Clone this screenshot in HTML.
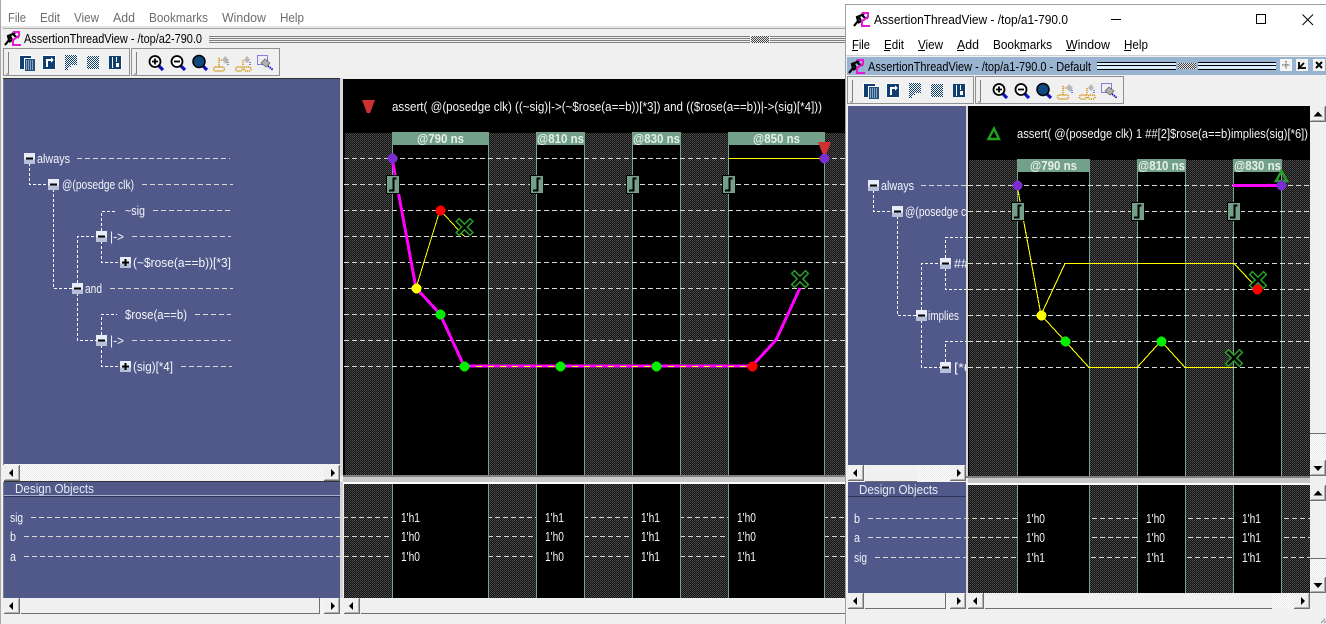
<!DOCTYPE html>
<html><head><meta charset="utf-8"><style>
html,body{margin:0;padding:0;background:#f0f0f0;overflow:hidden}
svg{display:block;font-family:"Liberation Sans",sans-serif}
text{font-size:12.5px;white-space:pre}
.w{fill:#f4f6fa}.k{fill:#000}.g{fill:#6d6d6d}.h{fill:#e6f0ea;font-weight:bold}
.d{fill:none;stroke:#d8d8d0;stroke-width:1;stroke-dasharray:5 3}
.c{fill:none;stroke:#fff;stroke-width:1;stroke-dasharray:3 2;shape-rendering:crispEdges}
.l{stroke:#78a48c;stroke-width:1}
.r{shape-rendering:crispEdges}
</style></head><body>
<svg width="1326" height="624" viewBox="0 0 1326 624" xmlns="http://www.w3.org/2000/svg">
<defs>
<pattern id="dot" width="2" height="2" patternUnits="userSpaceOnUse"><rect width="2" height="2" fill="#141414"/><rect width="1" height="1" fill="#4e4e4e"/><rect x="1" y="1" width="1" height="1" fill="#3e3e3e"/></pattern>
<pattern id="dit" width="2" height="2" patternUnits="userSpaceOnUse"><rect width="2" height="2" fill="#fff"/><rect width="1" height="1" fill="#e8e8e8"/><rect x="1" y="1" width="1" height="1" fill="#e8e8e8"/></pattern>
<pattern id="chk" width="2" height="2" patternUnits="userSpaceOnUse"><rect width="2" height="2" fill="#fff"/><rect width="1" height="1" fill="#0f3f70"/><rect x="1" y="1" width="1" height="1" fill="#0f3f70"/></pattern>
<pattern id="gry" width="2" height="2" patternUnits="userSpaceOnUse"><rect width="2" height="2" fill="#e8e8e8"/><rect width="1" height="1" fill="#404040"/><rect x="1" y="1" width="1" height="1" fill="#404040"/></pattern>

<g id="btnbase" class="r"><rect width="16" height="16" fill="#f0f0f0"/><rect x="0" y="15" width="16" height="1" fill="#707070"/><rect x="15" y="0" width="1" height="16" fill="#707070"/><rect x="1" y="14" width="14" height="1" fill="#b0b0b0"/><rect x="14" y="1" width="1" height="14" fill="#b0b0b0"/></g>
<g id="bl"><use href="#btnbase"/><path d="M5 8L9 4V12Z" fill="#000"/></g>
<g id="br"><use href="#btnbase"/><path d="M11 8L7 4V12Z" fill="#000"/></g>
<g id="bu"><use href="#btnbase"/><path d="M8 5.500L3.500 10.500H12.500Z" fill="#000"/></g>
<g id="bd"><use href="#btnbase"/><path d="M8 11L3.500 6H12.500Z" fill="#000"/></g>

<g id="gate" class="r"><rect x="-6" y="-9" width="13" height="18" fill="#73a088" stroke="#000" stroke-width="1"/><path d="M-3.500 6H1V-6H4" fill="none" stroke="#000" stroke-width="2"/></g>
<g id="xm"><path d="M-5.500 -5.500L5.500 5.500M5.500 -5.500L-5.500 5.500" stroke="#2aa02a" stroke-width="5.500" stroke-linecap="square"/><path d="M-5.500 -5.500L5.500 5.500M5.500 -5.500L-5.500 5.500" stroke="#000" stroke-width="2.600" stroke-linecap="square"/></g>
<g id="minus"><rect x="-5.500" y="-5.500" width="11" height="11" fill="#e8ecf6" class="r"/><rect x="-5.500" y="1" width="11" height="4.500" fill="#b8c0d8" class="r"/><rect x="-3.500" y="-1" width="7" height="2" fill="#000" class="r"/></g>
<g id="plus"><use href="#minus"/><rect x="-1" y="-3.500" width="2" height="7" fill="#000" class="r"/></g>

<g id="logo">
<path d="M1 14L5 9L4 5L9 3L12 6L15 6M6 5L8 9L5 11M7 9L10 10" fill="none" stroke="#000" stroke-width="2.200"/>
<circle cx="10" cy="1.800" r="1.600" fill="#000"/>
<path d="M9 1H15V5L9 9V14H17" fill="none" stroke="#e818d8" stroke-width="2"/>
</g>

<g id="tb">
<g class="r">
<rect x="3.500" y="48.500" width="126" height="27" fill="#f0f0f0" stroke="#909090"/>
<rect x="131.500" y="48.500" width="148" height="27" fill="#f0f0f0" stroke="#909090"/>
<path d="M8.500 52V74H6M136.500 52V74H134" fill="none" stroke="#808080"/>
<rect x="19" y="55" width="12" height="14" fill="#fff"/>
<rect x="20" y="56" width="11" height="13" fill="#0f3f70"/>
<rect x="24" y="58" width="11" height="13" fill="#fff"/>
<rect x="25" y="59" width="10" height="12" fill="#24507e"/>
<g fill="#8aa4c0"><rect x="26" y="60" width="1" height="10"/><rect x="28" y="60" width="1" height="10"/><rect x="30" y="60" width="1" height="10"/><rect x="32" y="60" width="1" height="10"/></g>
<rect x="42" y="55" width="14" height="15" fill="#fff"/>
<rect x="43" y="56" width="12" height="13" fill="#0f3f70"/>
<path d="M47 67V60H53" fill="none" stroke="#fff" stroke-width="2"/>
<path d="M51 57.500L54 60L51 62.500Z" fill="#fff"/>
<rect x="65" y="55" width="12" height="10" fill="url(#chk)"/>
<rect x="65" y="65" width="6" height="2" fill="url(#chk)"/>
<rect x="65" y="67" width="3" height="3" fill="url(#chk)"/>
<rect x="87" y="56" width="12" height="13" fill="url(#chk)"/>
<rect x="109" y="56" width="13" height="13" fill="#fff"/>
<rect x="109" y="56" width="12" height="13" fill="#0f3f70"/>
<rect x="112" y="57" width="1" height="11" fill="#fff"/>
<rect x="116" y="57" width="1" height="5" fill="#fff"/>
<rect x="116" y="63" width="3" height="4" fill="#fff"/>
</g>
<g>
<path d="M159 66L163 70" stroke="#1010c0" stroke-width="3.200"/>
<circle cx="155" cy="61.500" r="5.500" fill="#fff" stroke="#000" stroke-width="1.800"/>
<path d="M152 61.500H158M155 58.500V64.500" stroke="#000" stroke-width="1.800"/>
<path d="M181 66L185 70" stroke="#1010c0" stroke-width="3.200"/>
<circle cx="177" cy="61.500" r="5.500" fill="#fff" stroke="#000" stroke-width="1.800"/>
<path d="M174 61.500H180" stroke="#000" stroke-width="1.800"/>
<path d="M203 66L207 70" stroke="#1010c0" stroke-width="3.200"/>
<circle cx="199" cy="61.500" r="6" fill="#0e4a80" stroke="#000" stroke-width="1.500"/>
<rect x="213.500" y="67" width="11" height="4" rx="2" fill="none" stroke="#d09000" stroke-width="1.400" stroke-dasharray="1.200 .8"/>
<path d="M219 67V57M219 60H222" stroke="#d09000" stroke-width="1.300" stroke-dasharray="1.200 .8" fill="none"/>
<path d="M225 56L229 60L226 64L222 60Z" fill="#b8b8b8"/>
<path d="M228 62V66" stroke="#1010c0" stroke-dasharray="1 1"/>
<rect x="235.500" y="67" width="7" height="4" rx="2" fill="none" stroke="#d09000" stroke-width="1.400" stroke-dasharray="1.200 .8"/>
<rect x="244" y="67" width="7" height="4" rx="2" fill="none" stroke="#d09000" stroke-width="1.400" stroke-dasharray="1.200 .8"/>
<path d="M243 67V60" stroke="#d09000" stroke-width="1.300" stroke-dasharray="1.200 .8"/>
<path d="M247 56L250 60L247 63L244 60Z" fill="#b8b8b8"/>
<path d="M250 62V66" stroke="#1010c0" stroke-dasharray="1 1"/>
<rect x="257.500" y="55.500" width="10" height="9" fill="none" stroke="#1010c0" stroke-dasharray="1 1"/>
<path d="M265 59L270 63L266 67L261 63Z" fill="#b0b0b0" stroke="#666" stroke-width=".7"/>
<path d="M268 66L273 70" stroke="#1010c0" stroke-width="1.800" stroke-dasharray="1.500 .7"/>
</g>
</g>
</defs>

<!-- LEFT WINDOW -->
<rect width="1326" height="624" fill="#f0f0f0" class="r"/>
<rect width="846" height="26" fill="#fff" class="r"/>
<rect x="846" width="480" height="4" fill="#fff" class="r"/>
<rect x="0" y="0" width="1" height="624" fill="#a8a8a8" class="r"/>
<rect x="1" y="26" width="845" height="2" fill="#e4e4e4" class="r"/>
<g class="g">
<text lengthAdjust="spacingAndGlyphs" x="8" y="22" textLength="18">File</text><text lengthAdjust="spacingAndGlyphs" x="40" y="22" textLength="20">Edit</text><text lengthAdjust="spacingAndGlyphs" x="74" y="22" textLength="25">View</text><text lengthAdjust="spacingAndGlyphs" x="113" y="22" textLength="22">Add</text><text lengthAdjust="spacingAndGlyphs" x="149" y="22" textLength="59">Bookmarks</text><text lengthAdjust="spacingAndGlyphs" x="222" y="22" textLength="44">Window</text><text lengthAdjust="spacingAndGlyphs" x="280" y="22" textLength="24">Help</text>
</g>
<rect x="3" y="28" width="843" height="1" fill="#a8a8a8" class="r"/>
<use href="#logo" x="4" y="31"/>
<text lengthAdjust="spacingAndGlyphs" class="k" x="24" y="43" textLength="178">AssertionThreadView - /top/a2-790.0</text>
<g class="r" fill="#808080">
<rect x="209" y="36" width="541" height="1"/><rect x="209" y="38" width="541" height="1"/><rect x="209" y="40" width="541" height="1"/><rect x="209" y="42" width="541" height="1"/>
<rect x="770" y="36" width="76" height="1"/><rect x="770" y="38" width="76" height="1"/><rect x="770" y="40" width="76" height="1"/><rect x="770" y="42" width="76" height="1"/>
</g>
<rect x="751" y="36" width="18" height="7" fill="url(#gry)" class="r"/>
<use href="#tb"/>

<rect x="3" y="78" width="1" height="387" fill="#808080" class="r"/>
<rect x="4" y="79" width="336" height="386" fill="#50598a" class="r"/>
<rect x="3" y="78" width="338" height="1" fill="#333" class="r"/>
<!-- left tree -->
<path class="c" d="M29.500 163V184.500H48M53.500 189V288.500H72M77.500 283V236.500H96M101.500 231V211.500H117M101.500 241V262.500H120M77.500 293V340.500H96M101.500 335V314.500H117M101.500 345V366.500H120"/>
<path class="d" d="M77 158.500H230M142 184.500H233M153 210.500H233M132 236.500H231M110 288.500H233M195 314.500H231M132 340.500H231M181 366.500H232"/>
<g class="w">
<text lengthAdjust="spacingAndGlyphs" x="37" y="163" textLength="33">always</text>
<text lengthAdjust="spacingAndGlyphs" x="62" y="189" textLength="72">@(posedge clk)</text>
<text lengthAdjust="spacingAndGlyphs" x="125" y="215" textLength="20">~sig</text>
<text lengthAdjust="spacingAndGlyphs" x="110" y="241" textLength="14">|-&gt;</text>
<text lengthAdjust="spacingAndGlyphs" x="133" y="267" textLength="98">(~$rose(a==b))[*3]</text>
<text lengthAdjust="spacingAndGlyphs" x="85" y="293" textLength="17">and</text>
<text lengthAdjust="spacingAndGlyphs" x="125" y="319" textLength="62">$rose(a==b)</text>
<text lengthAdjust="spacingAndGlyphs" x="110" y="345" textLength="14">|-&gt;</text>
<text lengthAdjust="spacingAndGlyphs" x="133" y="371" textLength="40">(sig)[*4]</text>
</g>
<use href="#minus" x="29.500" y="158.500"/><use href="#minus" x="53.500" y="184.500"/><use href="#minus" x="101.500" y="236.500"/><use href="#plus" x="125.500" y="262.500"/><use href="#minus" x="77.500" y="288.500"/><use href="#minus" x="101.500" y="340.500"/><use href="#plus" x="125.500" y="366.500"/>

<!-- left top scrollbar -->
<rect x="4" y="464" width="336" height="17" fill="url(#dit)" class="r"/>
<rect x="4" y="481" width="336" height="1" fill="#333" class="r"/>
<use href="#bl" x="4" y="465"/><use href="#br" x="324" y="465"/>

<!-- left bottom blue panel -->
<rect x="3" y="482" width="1" height="116" fill="#808080" class="r"/>
<rect x="4" y="482" width="336" height="116" fill="#50598a" class="r"/>
<rect x="4" y="495" width="336" height="1" fill="#a8b0cc" class="r"/>
<rect x="4" y="496" width="336" height="1" fill="#2e3458" class="r"/>
<rect x="340" y="482" width="3" height="116" fill="#d4d4d4" class="r"/>
<text lengthAdjust="spacingAndGlyphs" x="15" y="493" textLength="79" fill="#e8ecf4">Design Objects</text>
<g class="w"><text lengthAdjust="spacingAndGlyphs" x="10" y="522" textLength="13">sig</text><text lengthAdjust="spacingAndGlyphs" x="10" y="541" textLength="6">b</text><text lengthAdjust="spacingAndGlyphs" x="10" y="561" textLength="6">a</text></g>

<!-- black upper -->
<rect x="340" y="78" width="3" height="398" fill="#d8d8d8" class="r"/>
<rect x="343" y="79" width="503" height="397" fill="#000" class="r"/>
<rect x="345" y="133" width="501" height="342" fill="url(#dot)" class="r"/>
<g class="r" fill="#000">
<rect x="392" y="133" width="96" height="342"/><rect x="536" y="133" width="48" height="342"/><rect x="632" y="133" width="48" height="342"/><rect x="728" y="133" width="96" height="342"/>
</g>
<g class="r">
<path class="l" d="M392.500 133V475M488.500 133V475M536.500 133V475M584.500 133V475M632.500 133V475M680.500 133V475M728.500 133V475M824.500 133V475"/>
<g fill="#73a088"><rect x="392" y="132" width="97" height="13"/><rect x="536" y="132" width="49" height="13"/><rect x="632" y="132" width="49" height="13"/><rect x="728" y="132" width="97" height="13"/></g>
</g>
<g class="h"><text lengthAdjust="spacingAndGlyphs" x="417" y="143" textLength="47">@790 ns</text><text lengthAdjust="spacingAndGlyphs" x="537" y="143" textLength="47">@810 ns</text><text lengthAdjust="spacingAndGlyphs" x="633" y="143" textLength="47">@830 ns</text><text lengthAdjust="spacingAndGlyphs" x="753" y="143" textLength="47">@850 ns</text></g>
<path d="M362 100H375L370 113H367Z" fill="#d03030"/>
<text lengthAdjust="spacingAndGlyphs" class="w" x="392" y="111" textLength="430">assert( @(posedge clk) ((~sig)|-&gt;(~$rose(a==b))[*3]) and (($rose(a==b))|-&gt;(sig)[*4]))</text>
<path class="d r" d="M344 158.500H846M344 184.500H846M344 210.500H846M344 236.500H846M344 262.500H846M344 288.500H846M344 314.500H846M344 340.500H846M344 366.500H846"/>
<path class="r" d="M728 158.500H824" stroke="#ffff00" stroke-width="1"/>
<path class="r" d="M416 288L440 210L464 236" fill="none" stroke="#ffff00" stroke-width="1"/>
<path class="r" d="M392 158L416 288L440 314L464 366H752L776 340L800 288" fill="none" stroke="#ff00ff" stroke-width="3"/>
<path class="r" d="M464 366.500H752" stroke="#ffff00" stroke-width="1" stroke-dasharray="6 6"/>
<use href="#gate" x="392.500" y="184.500"/><use href="#gate" x="536.500" y="184.500"/><use href="#gate" x="632.500" y="184.500"/><use href="#gate" x="728.500" y="184.500"/>
<use href="#xm" x="464.500" y="227"/><use href="#xm" x="800" y="279"/>
<path d="M818 142H831L826 155H823Z" fill="#d03030"/>
<g class="r">
<circle cx="392.500" cy="158.500" r="5" fill="#7a2ed0"/><circle cx="824.500" cy="158.500" r="5" fill="#7a2ed0"/>
<circle cx="440.500" cy="210.500" r="5" fill="#ff0000"/><circle cx="416.500" cy="288.500" r="5" fill="#ffff00"/><circle cx="440.500" cy="314.500" r="5" fill="#00ee00"/><circle cx="464.500" cy="366.500" r="5" fill="#00ee00"/><circle cx="560.500" cy="366.500" r="5" fill="#00ee00"/><circle cx="656.500" cy="366.500" r="5" fill="#00ee00"/><circle cx="752.500" cy="366.500" r="5" fill="#ff0000"/>
</g>

<!-- splitter -->
<rect x="343" y="475" width="503" height="2" fill="#808080" class="r"/>
<rect x="343" y="477" width="503" height="5" fill="#c8c8c8" class="r"/>
<rect x="343" y="482" width="503" height="2" fill="#fff" class="r"/>

<!-- black lower left -->
<rect x="344" y="484" width="502" height="114" fill="url(#dot)" class="r"/>
<path class="d r" d="M31 517.500H846M24 536.500H846M24 556.500H846"/>
<g class="r" fill="#000"><rect x="392" y="484" width="96" height="114"/><rect x="536" y="484" width="48" height="114"/><rect x="632" y="484" width="48" height="114"/><rect x="728" y="484" width="96" height="114"/></g>
<path class="l r" d="M392.500 484V598M488.500 484V598M536.500 484V598M584.500 484V598M632.500 484V598M680.500 484V598M728.500 484V598M824.500 484V598"/>
<g class="w">
<text lengthAdjust="spacingAndGlyphs" x="401" y="522" textLength="19">1'h1</text><text lengthAdjust="spacingAndGlyphs" x="545" y="522" textLength="19">1'h1</text><text lengthAdjust="spacingAndGlyphs" x="641" y="522" textLength="19">1'h1</text><text lengthAdjust="spacingAndGlyphs" x="737" y="522" textLength="19">1'h0</text>
<text lengthAdjust="spacingAndGlyphs" x="401" y="541" textLength="19">1'h0</text><text lengthAdjust="spacingAndGlyphs" x="545" y="541" textLength="19">1'h0</text><text lengthAdjust="spacingAndGlyphs" x="641" y="541" textLength="19">1'h1</text><text lengthAdjust="spacingAndGlyphs" x="737" y="541" textLength="19">1'h0</text>
<text lengthAdjust="spacingAndGlyphs" x="401" y="561" textLength="19">1'h0</text><text lengthAdjust="spacingAndGlyphs" x="545" y="561" textLength="19">1'h0</text><text lengthAdjust="spacingAndGlyphs" x="641" y="561" textLength="19">1'h1</text><text lengthAdjust="spacingAndGlyphs" x="737" y="561" textLength="19">1'h1</text>
</g>
<!-- left bottom scrollbars -->
<rect x="4" y="598" width="842" height="17" fill="#f0f0f0" class="r"/>
<rect x="320" y="598" width="4" height="16" fill="url(#dit)" class="r"/>
<rect x="21" y="613" width="299" height="1" fill="#707070" class="r"/>
<rect x="319" y="598" width="1" height="16" fill="#707070" class="r"/>
<use href="#bl" x="4" y="598"/><use href="#br" x="324" y="598"/><use href="#bl" x="344" y="598"/>
<rect x="361" y="613" width="485" height="1" fill="#707070" class="r"/>

<!-- RIGHT WINDOW -->
<rect x="845" y="4" width="481" height="620" fill="#f0f0f0" class="r"/>
<rect x="845" y="4" width="481" height="51" fill="#fff" class="r"/>
<rect x="845" y="4" width="481" height="1" fill="#a0a0a0" class="r"/>
<rect x="845" y="4" width="1" height="620" fill="#a0a0a0" class="r"/>
<use href="#logo" x="853" y="12"/>
<text lengthAdjust="spacingAndGlyphs" class="k" x="874" y="24" textLength="194">AssertionThreadView - /top/a1-790.0</text>
<g class="r" fill="none" stroke="#000"><path d="M1111 19.500H1121"/><rect x="1256.500" y="14.500" width="9" height="9"/></g>
<path d="M1302.500 14.500L1313 25M1313 14.500L1302.500 25" stroke="#000" stroke-width="1"/>
<g class="k">
<text lengthAdjust="spacingAndGlyphs" x="852" y="49" textLength="18">File</text><text lengthAdjust="spacingAndGlyphs" x="884" y="49" textLength="20">Edit</text><text lengthAdjust="spacingAndGlyphs" x="918" y="49" textLength="25">View</text><text lengthAdjust="spacingAndGlyphs" x="957" y="49" textLength="22">Add</text><text lengthAdjust="spacingAndGlyphs" x="993" y="49" textLength="59">Bookmarks</text><text lengthAdjust="spacingAndGlyphs" x="1066" y="49" textLength="44">Window</text><text lengthAdjust="spacingAndGlyphs" x="1124" y="49" textLength="24">Help</text>
</g>
<path class="r" d="M852 50.500H858M884 50.500H890M918 50.500H925M957 50.500H964M1020 50.500H1026M1066 50.500H1075M1124 50.500H1131" stroke="#000" fill="none"/>
<rect x="846" y="55" width="480" height="1" fill="#d0d0d0" class="r"/>
<rect x="847" y="57" width="479" height="18" fill="#99b4d1" class="r"/>
<use href="#logo" x="848" y="59"/>
<text lengthAdjust="spacingAndGlyphs" class="k" x="868" y="71" textLength="223">AssertionThreadView - /top/a1-790.0 - Default</text>
<g class="r">
<rect x="1097" y="62" width="79" height="8" fill="#000"/><rect x="1097" y="63" width="79" height="2" fill="#d8f0ff"/><rect x="1097" y="66" width="79" height="3" fill="#d8f0ff"/>
<rect x="1198" y="62" width="78" height="8" fill="#000"/><rect x="1198" y="63" width="78" height="2" fill="#d8f0ff"/><rect x="1198" y="66" width="78" height="3" fill="#d8f0ff"/>
<rect x="1178" y="63" width="18" height="6" fill="url(#gry)"/>
<rect x="1280" y="59" width="12" height="12" fill="#f4f4f4"/><rect x="1296" y="59" width="12" height="12" fill="#f4f4f4"/><rect x="1313" y="59" width="12" height="12" fill="#f4f4f4"/>
</g>
<path d="M1286 61V69M1282 65H1290" stroke="#333" stroke-width="1" stroke-dasharray="1.500 1"/>
<path d="M1298 69L1304 63M1299 62V68H1306" stroke="#000" stroke-width="1.800" fill="none"/>
<path d="M1316 62L1322 68M1322 62L1316 68" stroke="#000" stroke-width="2"/>
<use href="#tb" x="844" y="28"/>

<!-- right blue panel -->
<rect x="848" y="106" width="118" height="359" fill="#50598a" class="r"/>
<path class="c" d="M873.500 190V211.500H892M897.500 216V315.500H916M921.500 310V263.500H940M945.500 258V237.500H966M945.500 268V289.500H966M921.500 320V367.500H940M945.500 362V341.500H966"/>
<path class="d r" d="M921 185.500H968"/>
<g class="w">
<text lengthAdjust="spacingAndGlyphs" x="881" y="190" textLength="33">always</text>
<text lengthAdjust="spacingAndGlyphs" x="905" y="216" textLength="72">@(posedge clk)</text>
<text lengthAdjust="spacingAndGlyphs" x="954" y="268" textLength="14">##</text>
<text lengthAdjust="spacingAndGlyphs" x="928" y="320" textLength="31">implies</text>
<text lengthAdjust="spacingAndGlyphs" x="954" y="372" textLength="22">[*6]</text>
</g>
<use href="#minus" x="873.500" y="185.500"/><use href="#minus" x="897.500" y="211.500"/><use href="#minus" x="945.500" y="263.500"/><use href="#minus" x="921.500" y="315.500"/><use href="#minus" x="945.500" y="367.500"/>

<!-- right black upper -->
<rect x="966" y="106" width="2" height="370" fill="#d8d8d8" class="r"/>
<rect x="968" y="106" width="342" height="370" fill="#000" class="r"/>
<rect x="969" y="160" width="341" height="316" fill="url(#dot)" class="r"/>
<g class="r" fill="#000"><rect x="1017" y="160" width="72" height="316"/><rect x="1137" y="160" width="48" height="316"/><rect x="1233" y="160" width="48" height="316"/></g>
<path class="l r" d="M1017.500 160V476M1089.500 160V476M1137.500 160V476M1185.500 160V476M1233.500 160V476M1281.500 160V476"/>
<g class="r" fill="#73a088"><rect x="1017" y="159" width="73" height="13"/><rect x="1137" y="159" width="49" height="13"/><rect x="1233" y="159" width="49" height="13"/></g>
<g class="h"><text lengthAdjust="spacingAndGlyphs" x="1030" y="170" textLength="47">@790 ns</text><text lengthAdjust="spacingAndGlyphs" x="1138" y="170" textLength="47">@810 ns</text><text lengthAdjust="spacingAndGlyphs" x="1234" y="170" textLength="47">@830 ns</text></g>
<path d="M994 128.500L999 139H988.500Z" fill="none" stroke="#22a022" stroke-width="2.400"/>
<text lengthAdjust="spacingAndGlyphs" class="w" x="1017" y="138" textLength="291">assert( @(posedge clk) 1 ##[2]$rose(a==b)implies(sig)[*6])</text>
<path class="d r" d="M968 185.500H1310M968 211.500H1310M968 237.500H1310M968 263.500H1310M968 289.500H1310M968 315.500H1310M968 341.500H1310M968 367.500H1310"/>
<path class="r" d="M1017 185L1041 315L1065 263.500H1234L1258 289M1041 315L1065 341L1089 367.500H1137L1161 341L1185 367.500H1233" fill="none" stroke="#ffff00" stroke-width="1.100"/>
<path class="r" d="M1233 185.500H1281" stroke="#ff00ff" stroke-width="3"/>
<use href="#gate" x="1017.500" y="211.500"/><use href="#gate" x="1137.500" y="211.500"/><use href="#gate" x="1233.500" y="211.500"/>
<use href="#xm" x="1258" y="280"/><use href="#xm" x="1234" y="358"/>
<path d="M1281.500 171L1287 181H1276Z" fill="none" stroke="#22a022" stroke-width="2.400"/>
<g class="r">
<circle cx="1017.500" cy="185.500" r="5" fill="#7a2ed0"/><circle cx="1281.500" cy="185.500" r="5" fill="#7a2ed0"/>
<circle cx="1257.500" cy="289.500" r="5" fill="#ff0000"/><circle cx="1041.500" cy="315.500" r="5" fill="#ffff00"/><circle cx="1065.500" cy="341.500" r="5" fill="#00ee00"/><circle cx="1161.500" cy="341.500" r="5" fill="#00ee00"/>
</g>

<!-- right upper vscroll -->
<rect x="1310" y="106" width="16" height="370" fill="url(#dit)" class="r"/>
<rect x="1310" y="124" width="16" height="310" fill="#f0f0f0" class="r"/>
<rect x="1310" y="433" width="16" height="1" fill="#707070" class="r"/>
<use href="#bu" x="1310" y="106"/><use href="#bd" x="1310" y="460"/>

<!-- right tree hscroll -->
<rect x="848" y="465" width="118" height="17" fill="url(#dit)" class="r"/>
<rect x="865" y="465" width="52" height="16" fill="#f0f0f0" class="r"/>
<rect x="865" y="481" width="52" height="1" fill="#707070" class="r"/>
<use href="#bl" x="848" y="465"/><use href="#br" x="950" y="465"/>

<!-- right lower blue -->
<rect x="848" y="482" width="118" height="111" fill="#50598a" class="r"/>
<rect x="848" y="496" width="118" height="1" fill="#2e3458" class="r"/>
<text lengthAdjust="spacingAndGlyphs" x="859" y="494" textLength="79" fill="#e8ecf4">Design Objects</text>
<g class="w"><text lengthAdjust="spacingAndGlyphs" x="854" y="523" textLength="6">b</text><text lengthAdjust="spacingAndGlyphs" x="854" y="542" textLength="6">a</text><text lengthAdjust="spacingAndGlyphs" x="854" y="562" textLength="13">sig</text></g>

<!-- right splitter -->
<rect x="966" y="476" width="344" height="2" fill="#808080" class="r"/>
<rect x="968" y="478" width="342" height="5" fill="#c8c8c8" class="r"/>
<rect x="966" y="483" width="344" height="2" fill="#fff" class="r"/>
<rect x="966" y="485" width="2" height="108" fill="#d8d8d8" class="r"/>

<!-- right lower black -->
<rect x="968" y="485" width="342" height="108" fill="url(#dot)" class="r"/>
<path class="d r" d="M868 518.500H1310M868 537.500H1310M875 557.500H1310"/>
<g class="r" fill="#000"><rect x="1017" y="485" width="72" height="108"/><rect x="1137" y="485" width="48" height="108"/><rect x="1233" y="485" width="48" height="108"/></g>
<path class="l r" d="M1017.500 485V593M1089.500 485V593M1137.500 485V593M1185.500 485V593M1233.500 485V593M1281.500 485V593"/>
<g class="w">
<text lengthAdjust="spacingAndGlyphs" x="1026" y="523" textLength="19">1'h0</text><text lengthAdjust="spacingAndGlyphs" x="1146" y="523" textLength="19">1'h0</text><text lengthAdjust="spacingAndGlyphs" x="1242" y="523" textLength="19">1'h1</text>
<text lengthAdjust="spacingAndGlyphs" x="1026" y="542" textLength="19">1'h0</text><text lengthAdjust="spacingAndGlyphs" x="1146" y="542" textLength="19">1'h0</text><text lengthAdjust="spacingAndGlyphs" x="1242" y="542" textLength="19">1'h1</text>
<text lengthAdjust="spacingAndGlyphs" x="1026" y="562" textLength="19">1'h1</text><text lengthAdjust="spacingAndGlyphs" x="1146" y="562" textLength="19">1'h1</text><text lengthAdjust="spacingAndGlyphs" x="1242" y="562" textLength="19">1'h1</text>
</g>

<!-- right lower vscroll -->
<rect x="1310" y="485" width="16" height="108" fill="url(#dit)" class="r"/>
<rect x="1310" y="502" width="16" height="56" fill="#f0f0f0" class="r"/>
<rect x="1310" y="558" width="16" height="1" fill="#707070" class="r"/>
<use href="#bu" x="1310" y="485"/><use href="#bd" x="1310" y="577"/>

<!-- right bottom hscrolls -->
<rect x="848" y="593" width="118" height="16" fill="#f0f0f0" class="r"/>
<rect x="865" y="608" width="80" height="1" fill="#707070" class="r"/>
<rect x="945" y="593" width="1" height="16" fill="#707070" class="r"/>
<rect x="946" y="593" width="4" height="16" fill="url(#dit)" class="r"/>
<use href="#bl" x="848" y="593"/><use href="#br" x="950" y="593"/>
<rect x="968" y="593" width="342" height="16" fill="#f0f0f0" class="r"/>
<rect x="1272" y="593" width="21" height="16" fill="url(#dit)" class="r"/>
<rect x="985" y="608" width="287" height="1" fill="#707070" class="r"/>
<use href="#bl" x="968" y="593"/><use href="#br" x="1294" y="593"/>
<path d="M1321 623L1325 619M1324 623L1326 621" stroke="#909090"/>
</svg>
</body></html>
